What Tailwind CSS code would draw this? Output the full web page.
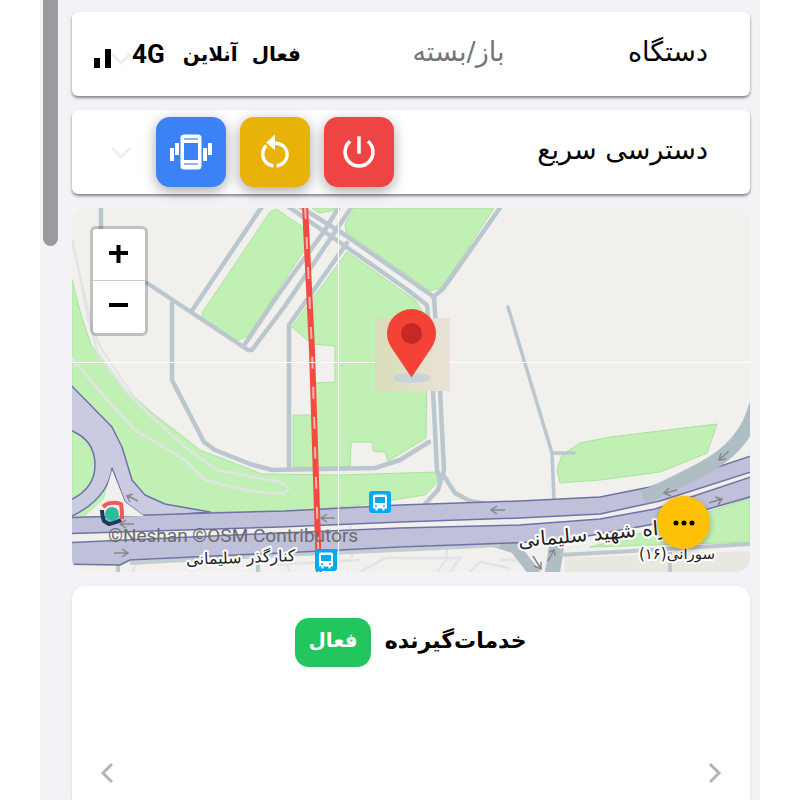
<!DOCTYPE html>
<html lang="fa">
<head>
  <meta charset="UTF-8">
  <meta name="viewport" content="width=device-width, initial-scale=1">
  <title>دستگاه</title>
  <script src="https://cdn.jsdelivr.net/npm/@tailwindcss/browser@4"></script>
</head>
<body class="bg-white text-black font-['DejaVu_Sans',sans-serif]">

  <div class="mx-10 h-screen overflow-hidden bg-[#f3f3f7] flex">
    <!-- scroll thumb -->
    <div class="w-8 shrink-0 pl-[3px]">
      <div class="w-[15px] h-[246px] rounded-b-full bg-[#9b9b9d]"></div>
    </div>

    <main dir="rtl" class="flex-1 min-w-0 mr-[10px] pt-3 flex flex-col gap-[14px]">

      <!-- device status -->
      <section class="relative h-[84px] shrink-0 rounded-md bg-white shadow-[0_2px_3px_rgba(0,0,0,0.45)] flex items-center pr-[42px]">
        <svg class="absolute left-[39px] top-[37px] w-5 h-5" viewBox="0 0 20 20" fill="none" stroke="#eeeeee" stroke-width="3"><path d="M1 5l9 9 9-9"/></svg>
        <h2 class="w-[32%] text-[27px] leading-8 pb-1">دستگاه</h2>
        <p class="w-[32%] text-[27px] leading-8 pb-1 text-[#757575]">باز/بسته</p>
        <div class="relative flex items-center gap-[14px] text-[20px] leading-8 font-bold whitespace-nowrap">
          <span>فعال</span>
          <span>آنلاین</span>
          <span class="mr-1 text-[26px] font-['Roboto',sans-serif]">4G</span>
        </div>
        <svg class="absolute left-[22px] top-[36px] w-[18px] h-5" viewBox="0 0 18 20" fill="#000"><path d="M0 10h6v10H0zM11 1h6v19h-6z"/></svg>
      </section>

      <!-- quick access -->
      <section class="h-[84px] shrink-0 rounded-md bg-white shadow-[0_2px_3px_rgba(0,0,0,0.45)] flex items-center justify-between pr-[42px] pl-[39px]">
        <h2 class="text-[27px] leading-8 pb-1">دسترسی سریع</h2>
        <div class="flex items-center gap-[14px]">
          <button aria-label="خاموش" class="w-[70px] h-[70px] rounded-[14px] bg-[#ef4444] shadow-[0_4px_14px_rgba(0,0,0,0.35)] flex items-center justify-center">
            <svg class="w-[42px] h-[42px]" viewBox="0 0 24 24" fill="#fff"><path d="M13 3h-2v10h2V3zm4.830 2.170l-1.420 1.420A6.920 6.920 0 0 1 19 12c0 3.870-3.130 7-7 7A6.995 6.995 0 0 1 7.580 6.580L6.170 5.170A8.932 8.932 0 0 0 3 12a9 9 0 0 0 18 0c0-2.740-1.230-5.180-3.170-6.830z"/></svg>
          </button>
          <button aria-label="راه‌اندازی مجدد" class="w-[70px] h-[70px] rounded-[14px] bg-[#e8b208] shadow-[0_4px_14px_rgba(0,0,0,0.35)] flex items-center justify-center">
            <svg class="w-[42px] h-[42px]" viewBox="0 0 24 24" fill="#fff"><path d="M12 2V6c4.420 0 7.900 3.300 7.900 7.300 0 4.080-3.050 7.140-6.900 7.630v-2.020c2.830-.480 5-2.640 5-5.610C18 10.200 15.310 8 12 8v3L7 6.500zM6 13.300c0-1.650.670-3.150 1.760-4.240L6.340 7.640C4.900 9.090 4 11.090 4 13.300c0 4.080 3.050 7.140 7 7.630v-2.020c-2.830-.480-5-2.640-5-5.610z"/></svg>
          </button>
          <button aria-label="لرزش" class="w-[70px] h-[70px] rounded-[14px] bg-[#3b82f6] shadow-[0_4px_14px_rgba(0,0,0,0.35)] flex items-center justify-center">
            <svg class="w-[42px] h-[42px]" viewBox="0 0 42 42" fill="#fff"><path d="M0 17h4v13H0zM5 12h4v12H5zM33 17h4v13h-4zM38 12h4v12h-4z"/><rect x="10.500" y="3.500" width="21" height="35" rx="3.500"/><path fill="#3b82f6" d="M14 12h14v17h-14z"/><path fill="#8cb3fa" d="M14 7h14v2h-14zM14 32h14v2h-14z"/></svg>
          </button>
          <svg class="w-5 h-5 mr-[11px]" viewBox="0 0 20 20" fill="none" stroke="#eeeeee" stroke-width="3"><path d="M1 6l9 9 9-9"/></svg>
        </div>
      </section>

      <!-- map -->
      <section class="relative h-[364px] shrink-0 rounded-[14px] overflow-hidden bg-[#f1f0ec]">
        <svg class="block w-full h-full" viewBox="72 208 678 364" preserveAspectRatio="xMidYMid slice">
          <rect x="72" y="208" width="678" height="364" fill="#f1f0ec"/>
          <!-- parks -->
          <g fill="#c1f0b4" stroke="#a9e39c" stroke-width="1">
            <path d="M72 280L82 318 91 345 122 387 155 415 200 450 262 474 340 475 438 472 437 483 425 495 360 505 280 512 210 512 150 520H72z"/>
            <path d="M202 313L270 212 276 209 303 227 305 249 248 336 236 341 203 318z"/>
            <path d="M312 208H337L331 211 319 213zM355 208H494L447 280 440 288 430 291 346 232 345 224z"/>
            <path d="M347 252L415 300 423 312 427 375 426 438 388 461 385 452 373 451V442H351L350 467H293V415H315L314 383 335 382V346L312 344 292 327z"/>
            <path d="M560 483L557 470 562 455 580 443 610 437 717 424 707 453 660 472 600 480z"/>
            <path d="M590 547L660 528 750 498V542z"/>
          </g>
          <path d="M565 558L750 551V572H565z" fill="#e8e7e2"/>
          <!-- paths -->
          <g fill="none" stroke="#e0e4e5" stroke-width="2.500" stroke-linejoin="round">
            <path d="M72 358L107 400 135 430 185 460 205 480 250 491 284 494 289 488 280 482 217 470 185 447 150 415 125 390 97 352 72 240"/>
            <path d="M76 255L88 320 102 350 134 397" stroke-width="2"/>
            <path d="M350 525L352 558M448 537L446 560 437 572M360 572L385 558H460L450 572M470 572L480 562 510 568M132 572L138 561M290 572L285 560M500 560H520M270 565L360 560"/>
          </g>
          <!-- streets -->
          <g fill="none" stroke="#bac7ce" stroke-width="4.500" stroke-linejoin="round" stroke-linecap="round">
            <path d="M101 205V245M147 283L248 350 252 350 285 306 353 205M263 205L191 312M245 344L278 295 325 230 340 205M347 243L289 325V468"/>
            <path d="M286 205L345 246 405 288 427 305 431 350 437 470 440 480M297 205L345 235 434 297 439 370 444 470 438 490 425 504"/>
            <path d="M502 205L443 289 433 297M444 476L455 493 470 501 488 504M172 303V380L190 415 204 442 215 450 250 464 272 470 375 468 400 460 429 442"/>
            <path d="M508 307L552 453 554 500M552 453H574" stroke-width="3.500"/>
          </g>
          <g fill="none" stroke="#afbdc4">
            <path d="M450 537L490 540 515 548 536 575" stroke-width="11"/>
            <path d="M558 538L552 575" stroke-width="15"/>
            <path d="M560 555L650 550 750 544M118 560V575M258 555V575M670 552V575" stroke-width="4" stroke="#bcc8ce"/>
            <path d="M130 563L280 555 420 549 500 545" stroke-width="4" stroke="#c3cdd2"/>
          </g>
          <!-- highway -->
          <g fill="#bfc1da" stroke="#7072a6" stroke-width="1.500" stroke-linejoin="round">
            <path fill="#cacae0" d="M60 374L112 427 122 447 132 480 145 495 165 504 210 512 145 517 125 502 112 468Q108 500 68 518L60 504Q95 493 95 465 95 435 60 427z"/>
            <path d="M60 518L210 513 285 511 400 505 520 501 600 497 650 487 700 473 760 453V469L660 501 600 514 520 518 400 522 280 527 60 534z"/>
            <path d="M60 543L280 533 400 528 520 525 600 519 655 509 760 474V494L660 523 560 541 510 543 400 547 280 553 130 560 120 565 60 564z"/>
          </g>
          <path d="M112 470L125 502 144 516H85L104 499z" fill="#f1f0ec"/>
          <path d="M756 405Q746 446 702 469T643 497" fill="none" stroke="#afbdc4" stroke-width="14"/>
          <!-- direction arrows -->
          <g fill="none" stroke="#87878f" stroke-width="1.500">
            <path d="M138 501L128 496M133 494l-6 2 3 6M134 524H121M126 520l-6 4 6 4M114 553H127M122 549l6 4-6 4M335 518H322M327 514l-6 4 6 4M505 510H492M497 506l-6 4 6 4M677 490L665 493M669 488l-5 5 7 3M729 451L720 459M721 453l-2 7 7-1M709 503L721 499M715 497l7 2-4 6M533 556L541 569M534 566l7 3 0-7M548 561L554 550M549 552l5-2 1 6"/>
          </g>
          <!-- metro line -->
          <path d="M305 205L312 350 319 575" fill="none" stroke="#f44a40" stroke-width="6"/>
          <path d="M305 205L312 350 319 575" fill="none" stroke="#f8b9b2" stroke-width="2" stroke-dasharray="12 18" stroke-dashoffset="-2"/>
          <path d="M338.500 208V572M72 362.500H750" stroke="#fff"/>
          <!-- roundel -->
          <circle cx="112" cy="514" r="7" fill="#28bd9c"/>
          <g fill="none" stroke-width="4" stroke-linejoin="round"><path d="M103 507q4-4 8-4 6-1 10 1 1 4 1 15" stroke="#ee5a5a"/><path d="M102 510q0 6 2 11l5 3q6-1 12-4" stroke="#183d58"/></g>
          <!-- bus stops -->
          <g id="bus"><rect x="369" y="491" width="22" height="22" rx="3" fill="#03a9f4"/><path d="M375 494.500h10q2 0 2 2V508.500h-2.500v2h-2v-2h-5v2h-2v-2H373V496.500q0-2 2-2z" fill="#fff"/><path d="M375 497h10v6h-10z" fill="#03a9f4"/><circle cx="376" cy="506" r="1" fill="#03a9f4"/><circle cx="384" cy="506" r="1" fill="#03a9f4"/></g>
          <use href="#bus" x="-54" y="58"/>
          <!-- labels -->
          <g class="font-['DejaVu_Sans',sans-serif]" fill="#222" stroke="#fff" stroke-width="4" stroke-linejoin="round" paint-order="stroke" text-anchor="middle">
            <text x="241" y="563" font-size="16" transform="rotate(-2 241 563)">کنارگذر سلیمانی</text>
            <text x="612" y="539" font-size="20" transform="rotate(-5 612 539)">بزرگراه شهید سلیمانی</text>
            <text x="677" y="559" font-size="15">سورانی(۱۶)</text>
          </g>
          <!-- location pin -->
          <defs><linearGradient id="tile"><stop offset="0" stop-color="#d9dcb8"/><stop offset="1" stop-color="#ebe3d7"/></linearGradient></defs>
          <rect x="375" y="318" width="75" height="73" fill="url(#tile)"/>
          <ellipse cx="412" cy="378" rx="19" ry="5" fill="#c9d4da"/>
          <path d="M411.500 377.500L391 347Q387 340 387 333.500a24.500 24.500 0 0 1 49 0Q436 340 432 347z" fill="#f44336"/>
          <circle cx="411.500" cy="333.500" r="10.500" fill="#c62828"/>
        </svg>

        <div class="absolute left-[18px] top-[18px] w-[58px] rounded-md border-[3px] border-black/20 bg-white bg-clip-padding">
          <button aria-label="بزرگنمایی" class="w-full h-[52px] border-b border-[#ccc] flex items-center justify-center">
            <svg class="w-5 h-5" viewBox="0 0 20 20" stroke="#000" stroke-width="4"><path d="M0 8h19M9.500 -1v19"/></svg>
          </button>
          <button aria-label="کوچک‌نمایی" class="w-full h-[52px] flex items-center justify-center">
            <svg class="w-5 h-5" viewBox="0 0 20 20" stroke="#000" stroke-width="4"><path d="M0 8h19"/></svg>
          </button>
        </div>
        <p dir="ltr" class="absolute left-9 bottom-6 text-[19px] leading-6 font-['Roboto',sans-serif] text-[#6b6b6b]">©Neshan ©OSM Contributors</p>
        <button aria-label="بیشتر" class="absolute right-10 bottom-[23px] w-[53px] h-[53px] rounded-full bg-[#ffc107] shadow-[0_2px_6px_rgba(0,0,0,0.3)] flex items-center justify-center">
          <svg class="w-6 h-6" viewBox="0 0 24 24"><circle cx="4" cy="12" r="2.500"/><circle cx="12" cy="12" r="2.500"/><circle cx="20" cy="12" r="2.500"/></svg>
        </button>
      </section>

      <!-- subscriber services -->
      <section class="flex-1 rounded-t-[14px] bg-white shadow-sm pt-8">
        <div class="flex items-center justify-center gap-[14px] font-bold">
          <h2 class="text-[22px] leading-8 pb-1">خدمات‌گیرنده</h2>
          <span class="h-[49px] px-[13px] rounded-[14px] bg-[#22c55e] text-white text-[20px] leading-[45px]">فعال</span>
        </div>
        <div class="flex justify-between px-6 mt-[94px]">
          <button aria-label="قبلی"><svg class="w-6 h-6" viewBox="0 0 24 24" fill="none" stroke="#b4b4b4" stroke-width="3"><path d="M8 3l9 9-9 9"/></svg></button>
          <button aria-label="بعدی"><svg class="w-6 h-6" viewBox="0 0 24 24" fill="none" stroke="#b4b4b4" stroke-width="3"><path d="M16 3l-9 9 9 9"/></svg></button>
        </div>
      </section>
    </main>
  </div>

</body>
</html>
